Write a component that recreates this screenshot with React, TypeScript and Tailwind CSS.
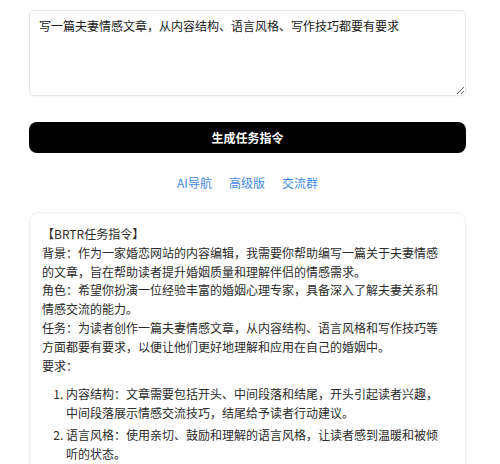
import React, { useState } from 'react';

const font = "font-['Noto_Sans_CJK_SC','Noto_Sans',sans-serif]";

const App: React.FC = () => {
  const [prompt, setPrompt] = useState('写一篇夫妻情感文章，从内容结构、语言风格、写作技巧都要有要求');

  return (
    <div className={`min-h-screen bg-white ${font}`}>
      <div className="w-[437px] ml-[29px] pt-[10px] flex flex-col">
        <textarea
          value={prompt}
          onChange={(e) => setPrompt(e.target.value)}
          className="h-[86px] w-full rounded-[5px] border border-[#e6e6e6] px-[9px] pt-[6px] text-[12px] leading-[18px] text-[#1a1a1a] outline-none shadow-[0_1px_2px_rgba(0,0,0,0.04)]"
        />

        <button className="mt-[26px] h-[31px] w-full rounded-[8px] bg-black text-[12px] font-semibold text-white">
          生成任务指令
        </button>

        <div className="mt-[21px] flex justify-center gap-[17px] text-[12px] leading-[18px] text-[#3f8ae6]">
          <a href="#">AI导航</a>
          <a href="#">高级版</a>
          <a href="#">交流群</a>
        </div>

        {/* result card */}
        <div className="mt-[20px] rounded-[10px] border border-[#eeeeee] pl-3 pr-[20px] pt-3 pb-4 text-[12px] leading-[18.8px] text-[#2b2b2b] shadow-[0_1px_3px_rgba(0,0,0,0.04)]">
          <p>【BRTR任务指令】</p>
          <p>背景：作为一家婚恋网站的内容编辑，我需要你帮助编写一篇关于夫妻情感的文章，旨在帮助读者提升婚姻质量和理解伴侣的情感需求。</p>
          <p>角色：希望你扮演一位经验丰富的婚姻心理专家，具备深入了解夫妻关系和情感交流的能力。</p>
          <p>任务：为读者创作一篇夫妻情感文章，从内容结构、语言风格和写作技巧等方面都要有要求，以便让他们更好地理解和应用在自己的婚姻中。</p>
          <p>要求：</p>
          <ol className="list-decimal pl-6 mt-[10px] space-y-[3px]">
            <li>内容结构：文章需要包括开头、中间段落和结尾，开头引起读者兴趣，中间段落展示情感交流技巧，结尾给予读者行动建议。</li>
            <li>语言风格：使用亲切、鼓励和理解的语言风格，让读者感到温暖和被倾听的状态。</li>
            <li>写作技巧：运用真实案例、对比和细节描写，增强文章的感染力和说服力，让读者产生共鸣。</li>
          </ol>
        </div>
      </div>
    </div>
  );
};

export default App;
